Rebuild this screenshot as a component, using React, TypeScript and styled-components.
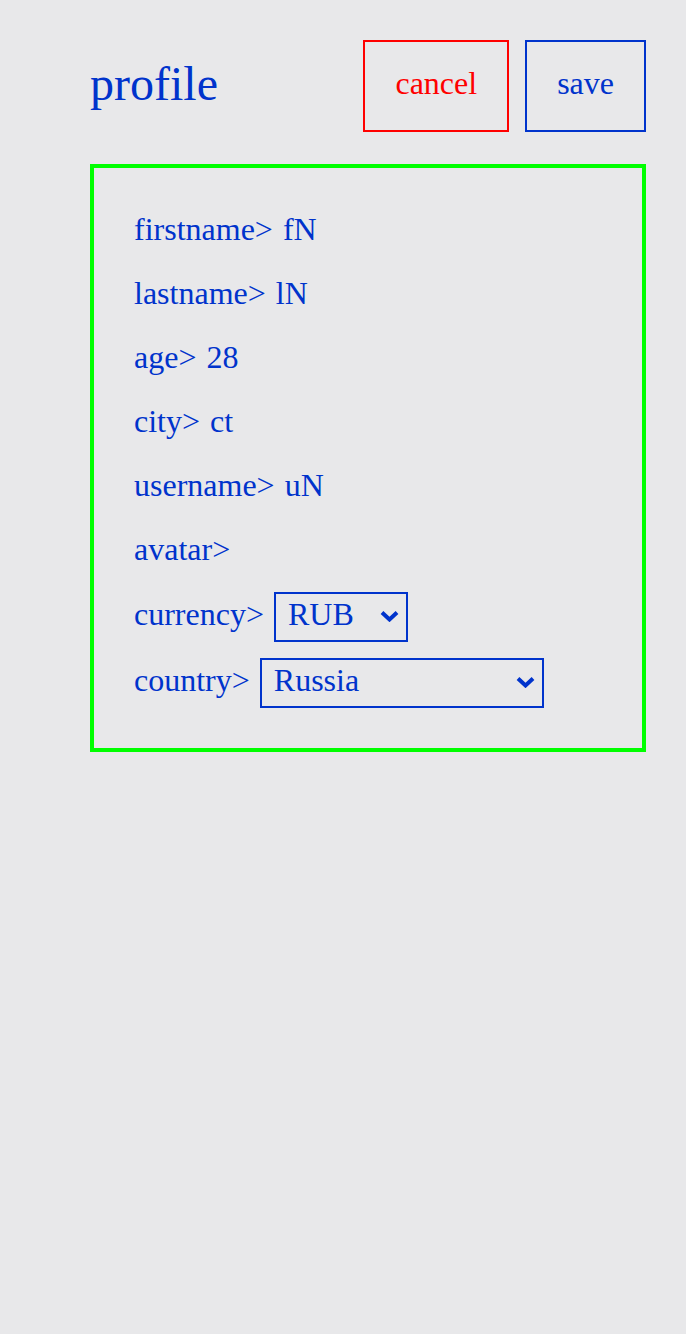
import React from 'react';
import styled, { createGlobalStyle } from 'styled-components';

const GlobalStyle = createGlobalStyle`
  body {
    margin: 0;
    background: #e8e8ea;
    font-family: "Liberation Serif", "Times New Roman", serif;
    color: #0033cc;
  }
`;

const Page = styled.div`
  padding: 40px 40px 40px 90px;
  display: flex;
  flex-direction: column;
  gap: 32px;
`;

const Header = styled.header`
  display: flex;
  align-items: center;
  justify-content: space-between;
`;

const Title = styled.h1`
  margin: 0;
  padding-bottom: 5px;
  font-size: 48px;
  font-weight: normal;
  line-height: 1.15;
`;

const Actions = styled.div`
  display: flex;
  gap: 16px;
`;

const Button = styled.button<{ $danger?: boolean }>`
  height: 92px;
  padding: 0 30px 6px;
  background: transparent;
  border: 2px solid ${(p) => (p.$danger ? '#ff0000' : '#0033cc')};
  color: ${(p) => (p.$danger ? '#ff0000' : '#0033cc')};
  font-family: inherit;
  font-size: 32px;
  cursor: pointer;
`;

const Card = styled.div`
  border: 4px solid #00ff00;
  padding: 41px 40px 40px;
  display: flex;
  flex-direction: column;
`;

const Row = styled.div<{ $space?: number }>`
  display: flex;
  align-items: baseline;
  gap: 10px;
  font-size: 32px;
  line-height: 40px;
  margin-top: ${(p) => p.$space ?? 0}px;
`;

const SelectWrap = styled.div<{ $width: number }>`
  position: relative;
  width: ${(p) => p.$width}px;
  display: flex;
`;

const Select = styled.select`
  appearance: none;
  width: 100%;
  height: 50px;
  padding: 0 40px 6px 12px;
  border: 2px solid #0033cc;
  border-radius: 0;
  background: transparent;
  color: #0033cc;
  font-family: inherit;
  font-size: 32px;
`;

const Chevron = styled.svg`
  position: absolute;
  right: 9px;
  top: 50%;
  width: 19px;
  height: 12px;
  margin-top: -7px;
  pointer-events: none;
`;

const Arrow = () => (
  <Chevron viewBox="0 0 19 12">
    <path d="M2 2.5 L9.5 9.5 L17 2.5" fill="none" stroke="#0033cc" strokeWidth="4" />
  </Chevron>
);

const fields = [
  ['firstname', 'fN'],
  ['lastname', 'lN'],
  ['age', '28'],
  ['city', 'ct'],
  ['username', 'uN'],
  ['avatar', ''],
];

export default function App() {
  return (
    <>
      <GlobalStyle />
      <Page>
        <Header>
          <Title>profile</Title>
          <Actions>
            <Button $danger>cancel</Button>
            <Button>save</Button>
          </Actions>
        </Header>
        <Card>
          {fields.map(([label, value], i) => (
            <Row key={label} $space={i === 0 ? 0 : 24}>
              <span>{label}&gt;</span>
              {value && <span>{value}</span>}
            </Row>
          ))}
          <Row $space={23}>
            <span>currency&gt;</span>
            <SelectWrap $width={134}>
              <Select defaultValue="RUB">
                <option>RUB</option>
                <option>EUR</option>
                <option>USD</option>
              </Select>
              <Arrow />
            </SelectWrap>
          </Row>
          <Row $space={16}>
            <span>country&gt;</span>
            <SelectWrap $width={284}>
              <Select defaultValue="Russia">
                <option>Russia</option>
                <option>Belarus</option>
                <option>Kazakhstan</option>
              </Select>
              <Arrow />
            </SelectWrap>
          </Row>
        </Card>
      </Page>
    </>
  );
}
